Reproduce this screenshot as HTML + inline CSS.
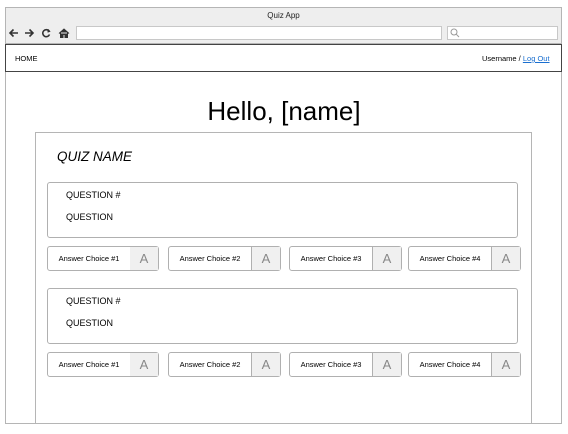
<!DOCTYPE html>
<html><head><style>
*{margin:0;padding:0;box-sizing:border-box}
body{width:568px;height:434px;background:#fff;position:relative;font-family:"Liberation Sans",Arial,sans-serif;overflow:hidden;color:#000}
.a{position:absolute}
.frame{left:5px;top:7px;width:557px;height:417px;border:1px solid #b5b5b5;background:#fff}
.title{left:5px;top:7px;width:557px;height:16px;background:#eeeeee;border:1px solid #b5b5b5;font-size:8px;text-align:center;line-height:15px;color:#222}
.tool{left:5px;top:22px;width:557px;height:22px;background:#eeeeee;border:1px solid #b5b5b5;border-top:none}
.url{left:76px;top:26px;width:366px;height:14px;background:#fff;border:1px solid #c8c8c8}
.srch{left:447px;top:26px;width:111px;height:14px;background:#fff;border:1px solid #c8c8c8}
.nav{left:5px;top:44px;width:557px;height:28px;border:1px solid #444;background:#fff;font-size:7.5px}
.quiz{left:35px;top:132px;width:497px;height:292px;border:1px solid #b5b5b5;border-bottom:none}
.q{width:471px;height:56px;border:1px solid #b0b0b0;border-radius:3px;left:47px;font-size:9px}
.q span{position:absolute;left:18px}
.ans{height:25px;border:1px solid #b0b0b0;border-radius:3px;background:#fff;font-size:7.5px}
.ans .t{position:absolute;left:0;top:0;width:83px;height:23px;line-height:23px;text-align:center;border-right:1px solid #b0b0b0}
.ans .b{position:absolute;right:0;top:0;width:28px;height:23px;background:#f0f0f0;line-height:23px;text-align:center;font-size:13px;color:#888}
</style></head><body>
<div class="a frame"></div>
<div class="a title">Quiz App</div>
<div class="a tool"></div>
<svg class="a" style="left:8px;top:27px" width="66" height="12" viewBox="0 0 66 12" fill="none" stroke="#333" stroke-width="1.6">
<path d="M2 6h8M5.5 2.5L2 6l3.5 3.5"/>
<path d="M17 6h8M21.5 2.5L25 6l-3.5 3.5"/>
<path d="M41 4a3.5 3.5 0 1 0 0.5 3.5"/><path d="M40 2.5l1.5 1.8-2 0.7" stroke-width="1.3"/>
<path d="M51 6.5L56 2l5 4.5M52.5 5.5v5h2.5v-3h2v3h2.5v-5" fill="#333" stroke-width="1"/>
</svg>
<div class="a url"></div>
<div class="a srch"></div>
<svg class="a" style="left:450px;top:28px" width="10" height="10" fill="none" stroke="#999" stroke-width="1"><circle cx="4" cy="4" r="3"/><path d="M6.2 6.2L9 9"/></svg>
<div class="a nav"></div>
<div class="a" style="left:15px;top:54px;font-size:7.5px">HOME</div>
<div class="a" style="left:482px;top:54px;font-size:7.5px">Username / <span style="color:#1a6fd0;text-decoration:underline">Log Out</span></div>
<div class="a" style="left:0;width:568px;top:96px;text-align:center;font-size:26px">Hello, [name]</div>
<div class="a quiz"></div>
<div class="a" style="left:57px;top:149px;font-size:13.5px;font-style:italic">QUIZ NAME</div>

<div class="a q" style="top:182px"><span style="top:7px">QUESTION #</span><span style="top:29px">QUESTION</span></div>
<div class="a ans" style="left:47px;top:246px;width:112px"><div class="t">Answer Choice #1</div><div class="b">A</div></div>
<div class="a ans" style="left:168px;top:246px;width:113px"><div class="t">Answer Choice #2</div><div class="b">A</div></div>
<div class="a ans" style="left:289px;top:246px;width:113px"><div class="t">Answer Choice #3</div><div class="b">A</div></div>
<div class="a ans" style="left:408px;top:246px;width:113px"><div class="t">Answer Choice #4</div><div class="b">A</div></div>

<div class="a q" style="top:288px"><span style="top:7px">QUESTION #</span><span style="top:29px">QUESTION</span></div>
<div class="a ans" style="left:47px;top:352px;width:112px"><div class="t">Answer Choice #1</div><div class="b">A</div></div>
<div class="a ans" style="left:168px;top:352px;width:113px"><div class="t">Answer Choice #2</div><div class="b">A</div></div>
<div class="a ans" style="left:289px;top:352px;width:113px"><div class="t">Answer Choice #3</div><div class="b">A</div></div>
<div class="a ans" style="left:408px;top:352px;width:113px"><div class="t">Answer Choice #4</div><div class="b">A</div></div>
</body></html>
